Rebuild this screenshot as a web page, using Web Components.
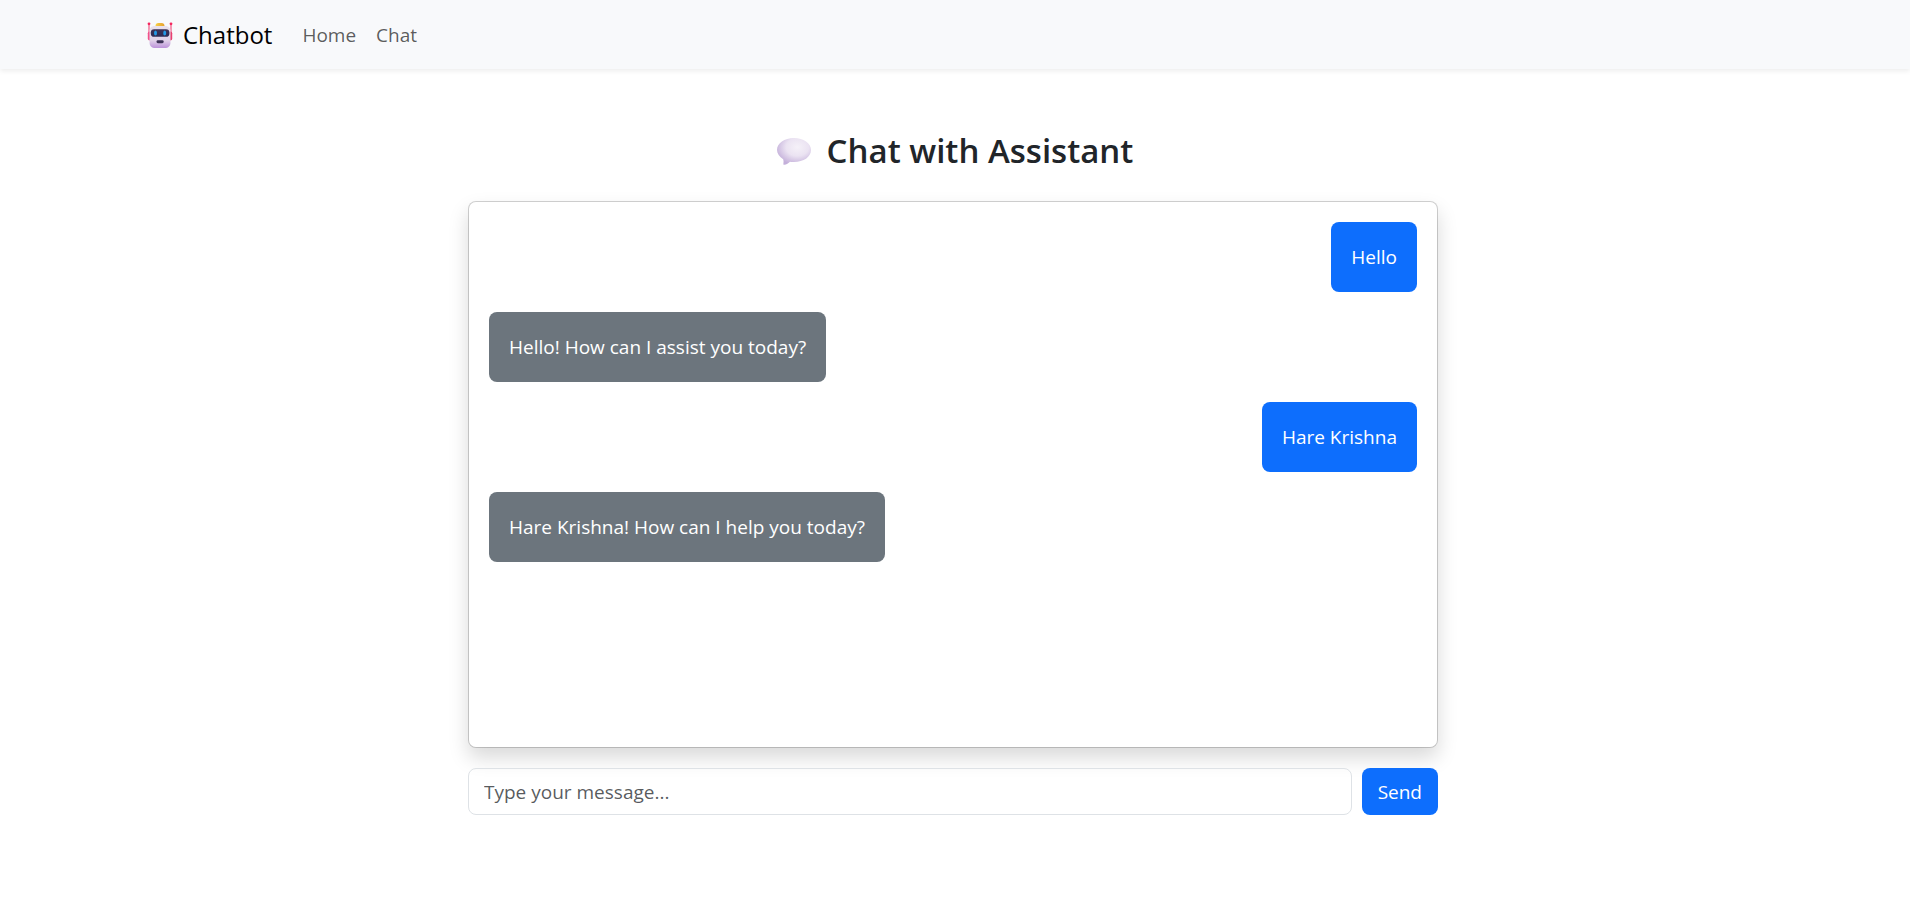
<!DOCTYPE html>
<html lang="en">
<head>
<meta charset="utf-8">
<meta name="viewport" content="width=device-width, initial-scale=1">
<title>Chatbot</title>
<style>
  body {
    margin: 0;
    background: #fff;
    color: #212529;
    font: 19px/30px "Open Sans", "Noto Sans", sans-serif;
    --primary: #0d6efd;
    --secondary: #6c757d;
    --radius: 8px;
  }
</style>
</head>
<body>
<nav-bar>
  <nav-link href="#home">Home</nav-link>
  <nav-link href="#chat">Chat</nav-link>
</nav-bar>
<chat-page>
  <span slot="title">Chat with Assistant</span>
  <chat-message from="user">Hello</chat-message>
  <chat-message from="bot">Hello! How can I assist you today?</chat-message>
  <chat-message from="user">Hare Krishna</chat-message>
  <chat-message from="bot">Hare Krishna! How can I help you today?</chat-message>
  <chat-composer slot="composer"></chat-composer>
</chat-page>

<script>
  class BaseElement extends HTMLElement {
    constructor() {
      super();
      this.attachShadow({ mode: "open" }).innerHTML = this.constructor.markup;
    }
  }

  customElements.define("robot-icon", class extends BaseElement {
    static markup = `
      <style>
        :host { display: block; flex: none; width: 26px; height: 26px; }
        svg { display: block; width: 100%; height: 100%; }
      </style>
      <svg viewBox="0 0 26 26" aria-hidden="true">
        <defs>
          <linearGradient id="face" x1="0" y1="0" x2="0" y2="1">
            <stop offset="0" stop-color="#e9e1ec"/><stop offset=".65" stop-color="#e0d1e8"/><stop offset="1" stop-color="#bd93da"/>
          </linearGradient>
          <linearGradient id="visor" x1="0" y1="0" x2="0" y2="1">
            <stop offset="0" stop-color="#3d3154"/><stop offset="1" stop-color="#2d2b55"/>
          </linearGradient>
          <linearGradient id="cap" x1="0" y1="0" x2="1" y2="0">
            <stop offset="0" stop-color="#f7cf45"/><stop offset="1" stop-color="#e5a02f"/>
          </linearGradient>
        </defs>
        <path d="M2 2v9M24 2v9" stroke="#f0648c" stroke-width="1.3"/>
        <circle cx="2" cy="1.8" r="1.4" fill="#f5265d"/><circle cx="24" cy="1.8" r="1.4" fill="#f5265d"/>
        <rect x=".8" y="9.500" width="4" height="9" rx="1.800" fill="#f3528a"/>
        <rect x="21.200" y="9.500" width="4" height="9" rx="1.800" fill="#e83f70"/>
        <path d="M8 4h10c4 0 5.500 2 5.500 6v10c0 4-2 6-6 6h-9c-4 0-6-2-6-6V10c0-4 1.500-6 5.500-6z" fill="url(#face)"/>
        <path d="M8.500 4c0-2 1-3 3-3h3c2 0 3 1 3 3z" fill="url(#cap)"/>
        <rect x="3.800" y="7.200" width="18.600" height="7.600" rx="3.400" fill="url(#visor)"/>
        <ellipse cx="8.500" cy="11" rx="1.500" ry="2.500" fill="#2298e5"/>
        <ellipse cx="17.700" cy="11" rx="1.500" ry="2.500" fill="#2298e5"/>
        <rect x="9.500" y="18.200" width="7.200" height="3" rx="1.400" fill="#3b3055"/>
      </svg>`;
  });

  customElements.define("speech-icon", class extends BaseElement {
    static markup = `
      <style>
        :host { display: block; flex: none; width: 34px; height: 27px; }
        svg { display: block; width: 100%; height: 100%; }
      </style>
      <svg viewBox="0 0 34 27" aria-hidden="true">
        <defs>
          <radialGradient id="bubble" cx=".6" cy=".34" r=".66">
            <stop offset="0" stop-color="#f5f1f8"/><stop offset=".5" stop-color="#ebe3f2"/><stop offset="1" stop-color="#c4b0da"/>
          </radialGradient>
        </defs>
        <path d="M17 0C26.500 0 34 5 34 12s-7.500 12-17 12c-1 0-2.500 0-4-.3-1.500 1.500-3.500 2.700-5.700 3.100-.8.100-1-.2-.9-1 .3-1.800.2-3.300-.2-4.600C2.500 18.800 0 15.500 0 12 0 5 7.500 0 17 0z" fill="url(#bubble)"/>
      </svg>`;
  });

  customElements.define("nav-link", class extends BaseElement {
    static markup = `
      <style>
        :host { display: block; }
        a { display: block; padding: 10px; color: rgba(0, 0, 0, .65); text-decoration: none; }
      </style>
      <a><slot></slot></a>`;
    connectedCallback() {
      this.shadowRoot.querySelector("a").href = this.getAttribute("href");
    }
  });

  customElements.define("nav-bar", class extends BaseElement {
    static markup = `
      <style>
        :host { display: block; background: #f8f9fb; box-shadow: 0 2px 5px rgba(0, 0, 0, .075); }
        nav {
          box-sizing: border-box; max-width: 1650px; min-height: 69px; margin: 0 auto; padding: 0 17px;
          display: flex; align-items: center; gap: 20px;
        }
        .brand {
          display: flex; align-items: center; gap: 10px;
          color: #000; font-size: 24px; line-height: 38px; text-decoration: none;
        }
        .links { display: flex; }
      </style>
      <nav>
        <a class="brand" href="#home"><robot-icon></robot-icon><span>Chatbot</span></a>
        <div class="links"><slot></slot></div>
      </nav>`;
  });

  customElements.define("chat-message", class extends BaseElement {
    static markup = `
      <style>
        :host { display: block; align-self: flex-start; max-width: 75%; }
        :host([from="user"]) { align-self: flex-end; }
        p { margin: 0; padding: 20px; border-radius: var(--radius); background: var(--secondary); color: #fff; }
        :host([from="user"]) p { background: var(--primary); }
      </style>
      <p><slot></slot></p>`;
  });

  customElements.define("chat-composer", class extends BaseElement {
    static markup = `
      <style>
        :host { display: block; }
        form { display: flex; gap: 10px; }
        input, button { box-sizing: border-box; height: 47px; border-radius: var(--radius); font: inherit; }
        input {
          flex: 1; min-width: 0; padding: 0 15px; border: 1px solid #dee2e6;
          background: transparent; color: #212529;
        }
        input::placeholder { color: rgba(33, 37, 41, .75); opacity: 1; }
        button { padding: 0 16px; border: 0; background: var(--primary); color: #fff; cursor: pointer; }
      </style>
      <form>
        <input type="text" aria-label="Message" placeholder="Type your message...">
        <button type="button">Send</button>
      </form>`;
  });

  customElements.define("chat-page", class extends BaseElement {
    static markup = `
      <style>
        :host { display: block; padding: 60px 16px; }
        h1 {
          display: flex; align-items: center; justify-content: center; gap: 16px;
          margin: 0 0 28px; font-size: 33px; line-height: 44px; font-weight: 600;
        }
        .column {
          box-sizing: border-box; max-width: 974px; margin: 0 auto; padding-right: 4px;
          display: flex; flex-direction: column; gap: 20px;
        }
        .log {
          box-sizing: border-box; min-height: 547px; padding: 20px;
          display: flex; flex-direction: column; gap: 20px;
          border: 1px solid rgba(0, 0, 0, .175); border-radius: var(--radius);
          background: #fff; background-clip: padding-box;
          box-shadow: 0 10px 20px rgba(0, 0, 0, .15);
        }
      </style>
      <main>
        <h1><speech-icon></speech-icon><slot name="title"></slot></h1>
        <div class="column">
          <section class="log" aria-label="Conversation"><slot></slot></section>
          <slot name="composer"></slot>
        </div>
      </main>`;
  });
</script>
</body>
</html>
